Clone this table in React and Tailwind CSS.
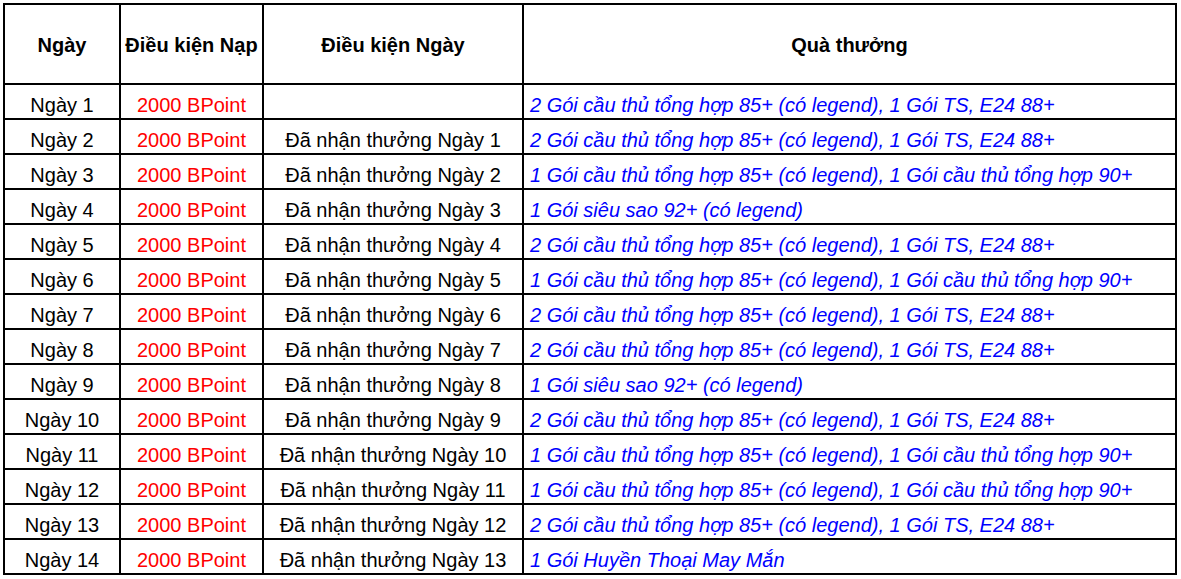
import { Fragment } from "react";

const A = "2 Gói cầu thủ tổng hợp 85+ (có legend), 1 Gói TS, E24 88+";
const B = "1 Gói cầu thủ tổng hợp 85+ (có legend), 1 Gói cầu thủ tổng hợp 90+";
const C = "1 Gói siêu sao 92+ (có legend)";
const D = "1 Gói Huyền Thoại May Mắn";

const rows = [
  ["", A],
  ["Đã nhận thưởng Ngày 1", A],
  ["Đã nhận thưởng Ngày 2", B],
  ["Đã nhận thưởng Ngày 3", C],
  ["Đã nhận thưởng Ngày 4", A],
  ["Đã nhận thưởng Ngày 5", B],
  ["Đã nhận thưởng Ngày 6", A],
  ["Đã nhận thưởng Ngày 7", A],
  ["Đã nhận thưởng Ngày 8", C],
  ["Đã nhận thưởng Ngày 9", A],
  ["Đã nhận thưởng Ngày 10", B],
  ["Đã nhận thưởng Ngày 11", B],
  ["Đã nhận thưởng Ngày 12", A],
  ["Đã nhận thưởng Ngày 13", D],
];

const cell = "bg-white h-[33px] flex items-end pb-[1px] leading-[23px] whitespace-nowrap";
const head = "bg-white h-[78px] flex items-center justify-center pt-[2px] leading-[23px] font-bold whitespace-nowrap";

export default function App() {
  return (
    <div className="bg-white w-[1181px] h-[579px] p-[3px]" style={{ fontFamily: '"Liberation Sans", Arial, sans-serif' }}>
      <div className="w-[1174px] bg-black p-[2px] grid grid-cols-[114px_141px_258px_651px] gap-[2px] text-[20px] text-black">
        <div className={head}>Ngày</div>
        <div className={head}>Điều kiện Nạp</div>
        <div className={head}>Điều kiện Ngày</div>
        <div className={head}>Quà thưởng</div>
        {rows.map((r, i) => (
          <Fragment key={i}>
            <div className={`${cell} justify-center`}>Ngày {i + 1}</div>
            <div className={`${cell} justify-center text-[#ff0000]`}>2000 BPoint</div>
            <div className={`${cell} justify-center`}>{r[0]}</div>
            <div className={`${cell} pl-[6px] italic text-[#0000ff]`}>{r[1]}</div>
          </Fragment>
        ))}
      </div>
    </div>
  );
}
